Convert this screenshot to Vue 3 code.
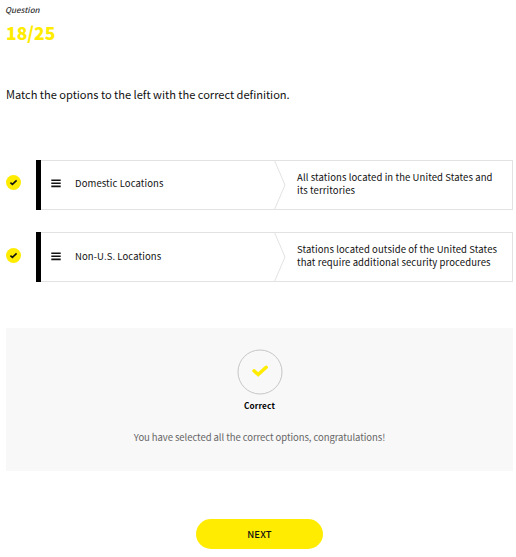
<script setup>
const rows = [
  { id: 1, option: 'Domestic Locations', definition: 'All stations located in the United States and its territories' },
  { id: 2, option: 'Non-U.S. Locations', definition: 'Stations located outside of the United States that require additional security procedures' },
]
</script>

<template>
  <main class="quiz">
    <p class="label">Question</p>
    <h1 class="count">18/25</h1>
    <p class="prompt">Match the options to the left with the correct definition.</p>

    <div class="rows">
      <div v-for="row in rows" :key="row.id" class="row">
        <svg class="badge" viewBox="0 0 15 15">
          <circle cx="7.5" cy="7.5" r="7.5" fill="#ffec00" />
          <path d="M4.4 7.7 6.4 9.4 10.6 5.4" fill="none" stroke="#111" stroke-width="1.6" />
        </svg>
        <div class="bar"></div>
        <div class="card">
          <div class="option">
            <svg class="handle" viewBox="0 0 10 10">
              <path d="M.3 2.2H9.7M.3 5.3H9.7M.3 8.4H9.7" stroke="#111" stroke-width="1.6" />
            </svg>
            <span>{{ row.option }}</span>
          </div>
          <svg class="chevron" viewBox="0 0 12 50">
            <path d="M.5 .5 11 25 .5 49.5" fill="none" stroke="#e2e2e2" />
          </svg>
          <p class="definition">{{ row.definition }}</p>
        </div>
      </div>
    </div>

    <section class="feedback">
      <svg class="result" viewBox="0 0 46 46">
        <circle cx="23" cy="23" r="22" fill="none" stroke="#c6c6c6" />
        <path d="M17 21.8 21.2 25.5 29.2 18.3" fill="none" stroke="#ffec00" stroke-width="3.5" stroke-linecap="round" />
      </svg>
      <strong class="verdict">Correct</strong>
      <p class="message">You have selected all the correct options, congratulations!</p>
    </section>

    <button class="next">NEXT</button>
  </main>
</template>

<style>
body { margin: 0; background: #fff; }
</style>

<style scoped>
.quiz {
  box-sizing: border-box;
  width: 516px;
  height: 557px;
  padding: 4px 3px 0 6px;
  display: flex;
  flex-direction: column;
  font-family: "Noto Sans CJK SC", "Noto Sans", sans-serif;
  color: #111;
  white-space: nowrap;
}
p, h1 { margin: 0; }
svg { display: block; flex: none; }
.label { margin-left: -1px; font-size: 8px; line-height: 12px; font-style: italic; font-weight: 500; color: #333; }
.count { margin-top: 5px; font-size: 17.5px; line-height: 24px; font-weight: 900; color: #ffec00; }
.prompt { margin-top: 39px; font-size: 11.1px; letter-spacing: -.02px; line-height: 20px; }
.rows { margin-top: 56px; display: grid; gap: 22px; }
.row { display: flex; align-items: center; height: 50px; }
.badge { width: 15px; height: 15px; margin: -5px 15px 0 0; }
.bar { width: 5px; height: 50px; background: #000; }
.card {
  box-sizing: border-box;
  display: flex;
  width: 472px;
  height: 50px;
  border: 1px solid #e2e2e2;
  border-left: 0;
  font-size: 9.5px;
  letter-spacing: .1px;
}
.option { width: 233px; height: 44px; display: flex; align-items: center; gap: 14px; padding-left: 10px; box-sizing: border-box; }
.row:nth-child(2) .option { height: 46px; }
.row:nth-child(2) .badge { margin-top: -3px; }
.handle { width: 10px; height: 10px; }
.chevron { width: 12px; height: 50px; margin-top: -1px; }
.definition { width: 206px; padding: 10px 0 0 11px; line-height: 13px; white-space: normal; }
.feedback {
  box-sizing: border-box;
  margin-top: 46px;
  height: 143px;
  padding-top: 21px;
  background: #f8f8f8;
  display: flex;
  flex-direction: column;
  align-items: center;
}
.result { width: 46px; height: 46px; }
.verdict { margin-top: 4px; font-size: 8.2px; letter-spacing: .15px; line-height: 13px; font-weight: 700; color: #000; }
.message { margin-top: 17px; font-size: 9.5px; letter-spacing: -.06px; line-height: 16px; color: #666; }
.next {
  align-self: center;
  margin-top: 48px;
  width: 127px;
  height: 30px;
  padding: 0;
  border: 0;
  border-radius: 15px;
  background: #ffec00;
  color: #111;
  font: 500 9.5px/30px "Noto Sans CJK SC", sans-serif;
  letter-spacing: .2px;
}
</style>
